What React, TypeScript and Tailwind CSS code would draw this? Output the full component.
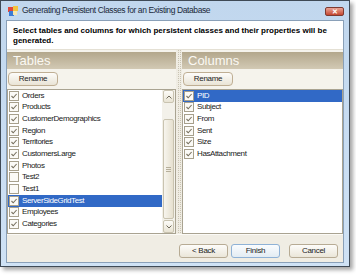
import React from 'react';

const tables = [
  { name: 'Orders', checked: true },
  { name: 'Products', checked: true },
  { name: 'CustomerDemographics', checked: true },
  { name: 'Region', checked: true },
  { name: 'Territories', checked: true },
  { name: 'CustomersLarge', checked: true },
  { name: 'Photos', checked: true },
  { name: 'Test2', checked: false },
  { name: 'Test1', checked: false },
  { name: 'ServerSideGridTest', checked: true, selected: true },
  { name: 'Employees', checked: true },
  { name: 'Categories', checked: true },
];

const columns = [
  { name: 'PID', checked: true, selected: true },
  { name: 'Subject', checked: true },
  { name: 'From', checked: true },
  { name: 'Sent', checked: true },
  { name: 'Size', checked: true },
  { name: 'HasAttachment', checked: true },
];

function CheckBox({ checked }: { checked: boolean }) {
  return (
    <svg width="10" height="10" viewBox="0 0 10 10" className="shrink-0">
      <rect x="0.5" y="0.5" width="9" height="9" fill="#fbfaf6" stroke="#a7a08c" />
      {checked && <path d="M2.5 5 L4.2 6.8 L7.6 3" fill="none" stroke="#77705e" strokeWidth="1.1" />}
    </svg>
  );
}

function ListRow({ name, checked, selected }: { name: string; checked: boolean; selected?: boolean }) {
  return (
    <div className={`flex h-[11.67px] items-center gap-[3px] pl-[1px] ${selected ? 'bg-[#3169c6] text-white' : 'text-[#1a1a1a]'}`}>
      <CheckBox checked={checked} />
      <span className="leading-none tracking-[-0.4px]">{name}</span>
    </div>
  );
}

function PanelHeader({ title }: { title: string }) {
  return (
    <div className="mt-[2px] flex h-[17px] items-center bg-gradient-to-b from-[#b3a78c] to-[#d2c9b4] pl-[6px] text-[13px] text-[#fbf9f3]">
      {title}
    </div>
  );
}

function RenameButton() {
  return (
    <div className="ml-[1px] mt-[3px] flex h-[14px] w-[50px] items-center justify-center rounded-[4px] border border-[#bfae93] bg-gradient-to-b from-[#fdfcfa] to-[#e9e4d6] text-[8px] tracking-[-0.3px] text-[#222]">
      Rename
    </div>
  );
}

function ScrollBar() {
  return (
    <div className="flex w-[13px] flex-col bg-[#f3f1ea] px-[1px]">
      <div className="flex h-[13px] items-center justify-center rounded-[2px] border border-[#c9c3b0] bg-gradient-to-b from-[#fdfcf8] to-[#e8e3d3]">
        <svg width="6" height="4" viewBox="0 0 6 4"><path d="M0.5 3.5 L3 1 L5.5 3.5" fill="none" stroke="#6f6a5b" strokeWidth="1" /></svg>
      </div>
      <div className="h-[16px]" />
      <div className="flex flex-1 items-center justify-center rounded-[2px] border border-[#c9c3b0] bg-gradient-to-r from-[#f7f5ee] to-[#e6e0cf]">
        <div className="flex flex-col gap-[1px]">
          <div className="h-px w-[5px] bg-[#b6af9b]" />
          <div className="h-px w-[5px] bg-[#b6af9b]" />
          <div className="h-px w-[5px] bg-[#b6af9b]" />
        </div>
      </div>
      <div className="mt-[1px] flex h-[13px] items-center justify-center rounded-[2px] border border-[#c9c3b0] bg-gradient-to-b from-[#fdfcf8] to-[#e8e3d3]">
        <svg width="6" height="4" viewBox="0 0 6 4"><path d="M0.5 0.5 L3 3 L5.5 0.5" fill="none" stroke="#6f6a5b" strokeWidth="1" /></svg>
      </div>
    </div>
  );
}

function Button({ label, primary }: { label: string; primary?: boolean }) {
  return (
    <div
      className={`flex h-[14px] w-[49px] items-center justify-center rounded-[3px] border text-[8px] tracking-[-0.3px] text-[#222] ${
        primary ? 'border-[#8fb2d6] bg-gradient-to-b from-[#fafcfe] to-[#e3ecf3]' : 'border-[#b7ab94] bg-gradient-to-b from-[#fdfcfa] to-[#ebe6d9]'
      }`}
    >
      {label}
    </div>
  );
}

export default function App() {
  return (
    <div className="h-[276px] w-[356px] bg-white font-['Liberation_Sans',sans-serif]">
      <div className="flex h-[267px] w-[350px] flex-col border border-[#3f4a56] bg-gradient-to-b from-[#c1d7ee] to-[#cfe2f5] shadow-[3px_3px_4px_rgba(0,0,0,0.35)]">
        {/* Title bar */}
        <div className="flex h-[19px] items-center pl-[7px] pr-[4px]">
          <svg width="10" height="10" viewBox="0 0 10 10" className="mr-[4px]">
            <rect x="0" y="1" width="5" height="5" fill="#e0473a" />
            <rect x="5" y="0" width="5" height="5" fill="#f2c43e" />
            <rect x="1" y="5" width="5" height="5" fill="#3b7bd3" />
            <rect x="5" y="5" width="4" height="4" fill="#f5e6b0" />
          </svg>
          <span className="text-[8.5px] tracking-[-0.4px] text-[#1c2a3a]">Generating Persistent Classes for an Existing Database</span>
          <div className="ml-auto mr-[1px] mt-[2px] flex h-[9px] w-[19px] items-center justify-center rounded-[2px] border border-[#7d3a30] bg-gradient-to-b from-[#e9a395] to-[#c4452f]">
            <span className="text-[7px] font-bold leading-none text-white">✕</span>
          </div>
        </div>
        {/* Client area */}
        <div className="mx-[5px] mb-[3px] flex flex-1 flex-col border border-[#8aa0b8] bg-[#f0ede4]">
          <div className="h-[28px] bg-white px-[6px] pt-[5px] text-[8px] font-bold leading-[10px] text-black">
            Select tables and columns for which persistent classes and their properties will be generated.
          </div>
          <div className="flex h-[185px] border-t border-[#e4e0d4]">
            {/* Tables panel */}
            <div className="flex w-[169px] flex-col bg-[#f5f3ec]">
              <PanelHeader title="Tables" />
              <RenameButton />
              <div className="mt-[3px] flex flex-1 border border-[#a9a391] bg-white text-[8px]">
                <div className="flex-1">
                  {tables.map((t) => (
                    <ListRow key={t.name} {...t} />
                  ))}
                </div>
                <ScrollBar />
              </div>
            </div>
            {/* Splitter */}
            <div className="flex w-[6px] justify-center gap-[1px] bg-[#efece3]">
              <div className="w-px bg-[repeating-linear-gradient(to_bottom,#c9c3b2_0px,#c9c3b2_1px,transparent_1px,transparent_2px)]" />
              <div className="w-px bg-[repeating-linear-gradient(to_bottom,#c9c3b2_0px,#c9c3b2_1px,transparent_1px,transparent_2px)]" />
            </div>
            {/* Columns panel */}
            <div className="flex flex-1 flex-col bg-[#f5f3ec]">
              <PanelHeader title="Columns" />
              <RenameButton />
              <div className="mt-[3px] flex-1 border border-[#a9a391] bg-white text-[8px]">
                {columns.map((c) => (
                  <ListRow key={c.name} {...c} />
                ))}
              </div>
            </div>
          </div>
          {/* Footer */}
          <div className="flex flex-1 items-center justify-end gap-[3px] border-t border-[#fbfaf6] pr-[5px] pt-[5px]">
            <Button label="< Back" />
            <Button label="Finish" primary />
            <div className="w-[3px]" />
            <Button label="Cancel" />
          </div>
        </div>
      </div>
    </div>
  );
}
